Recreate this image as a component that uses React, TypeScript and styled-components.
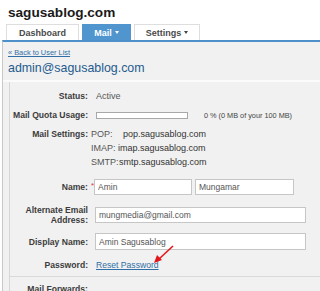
import React from 'react'
import styled, { createGlobalStyle } from 'styled-components'

const GlobalStyle = createGlobalStyle`
  html, body {
    margin: 0;
    padding: 0;
    background: #ffffff;
  }
  body {
    width: 320px;
    height: 291px;
    overflow: hidden;
    font-family: 'Liberation Sans', Arial, sans-serif;
  }
`

const App = () => {
  return (
    <>
      <GlobalStyle />
      <Header>
        <SiteTitle>sagusablog.com</SiteTitle>
        <Tabs>
          <Tab $width={73}>Dashboard</Tab>
          <Tab $width={49} $active>
            Mail <Caret $active />
          </Tab>
          <Tab $width={66}>
            Settings <Caret />
          </Tab>
        </Tabs>
      </Header>
      <Main>
        <TopSection>
          <BackLink href="#">« Back to User List</BackLink>
          <Account>admin@sagusablog.com</Account>
        </TopSection>
        <Panel>
          <Row $top={7}>
            <Label>Status:</Label>
            <Value>Active</Value>
          </Row>
          <Row $top={5}>
            <Label>Mail Quota Usage:</Label>
            <Quota>
              <QuotaBar />
              <QuotaText>0 % (0 MB of your 100 MB)</QuotaText>
            </Quota>
          </Row>
          <Row $top={5} $align="start">
            <Label>Mail Settings:</Label>
            <Servers>
              <Server>
                <Proto $width={32}>POP:</Proto>pop.sagusablog.com
              </Server>
              <Server>
                <Proto $width={27}>IMAP:</Proto>imap.sagusablog.com
              </Server>
              <Server>
                <Proto $width={28}>SMTP:</Proto>smtp.sagusablog.com
              </Server>
            </Servers>
          </Row>
          <Row $top={10}>
            <Label>
              Name:<Required>*</Required>
            </Label>
            <Pair>
              <Field $width={98} defaultValue="Amin" />
              <Field $width={99} defaultValue="Mungamar" />
            </Pair>
          </Row>
          <Row $top={10}>
            <Label $lines>
              Alternate Email
              <br />
              Address:
            </Label>
            <Field $width={211} defaultValue="mungmedia@gmail.com" />
          </Row>
          <Row $top={8}>
            <Label>Display Name:</Label>
            <Field $width={211} $height={17} defaultValue="Amin Sagusablog" />
          </Row>
          <Row $top={8}>
            <Label>Password:</Label>
            <LinkCell>
              <ResetLink href="#">Reset Password</ResetLink>
              <Arrow width="24" height="22" viewBox="0 0 24 22">
                <line x1="20" y1="2" x2="6" y2="15" stroke="#e3161b" strokeWidth="1.6" />
                <polygon points="1,19 4,11 9,16" fill="#e3161b" />
              </Arrow>
            </LinkCell>
          </Row>
          <Divider />
          <Row $top={5}>
            <Label>Mail Forwards:</Label>
          </Row>
        </Panel>
      </Main>
    </>
  )
}

const Header = styled.header`
  padding: 4px 0 0 8px;
`

const SiteTitle = styled.h1`
  margin: 0 0 3px;
  font-size: 13.6px;
  line-height: 17px;
  font-weight: bold;
  color: #1a1a1a;
`

const Tabs = styled.nav`
  display: flex;
  gap: 3px;
  margin-left: -2px;
`

const Tab = styled.div<{ $width: number; $active?: boolean }>`
  width: ${({ $width }) => $width}px;
  height: 16px;
  box-sizing: border-box;
  display: flex;
  align-items: center;
  justify-content: center;
  gap: 3px;
  font-size: 9px;
  font-weight: bold;
  color: ${({ $active }) => ($active ? '#ffffff' : '#4a4a4a')};
  background: ${({ $active }) => ($active ? '#5195cf' : '#ffffff')};
  border: 1px solid ${({ $active }) => ($active ? '#5195cf' : '#dedede')};
  border-bottom: none;
`

const Caret = styled.span<{ $active?: boolean }>`
  width: 0;
  height: 0;
  border-left: 2.5px solid transparent;
  border-right: 2.5px solid transparent;
  border-top: 3px solid ${({ $active }) => ($active ? '#ffffff' : '#444444')};
`

const Main = styled.main`
  margin-left: 2px;
  border-left: 1px solid #c9c9c9;
  border-top: 2px solid #4d90ca;
  background: #f1f1f1;
  height: 260px;
`

const TopSection = styled.section`
  padding: 6px 0 0 5px;
  height: 32px;
  border-bottom: 2px solid #fbfbfb;
`

const BackLink = styled.a`
  display: block;
  font-size: 7.4px;
  line-height: 10px;
  color: #2f6fa6;
  text-decoration: underline;
`

const Account = styled.h2`
  margin: 2px 0 0;
  font-size: 12.4px;
  line-height: 16px;
  font-weight: normal;
  color: #1f5b8e;
`

const Panel = styled.section`
  margin-left: 6px;
  border-left: 1px solid #d6d6d6;
  display: flex;
  flex-direction: column;
  height: 220px;
`

const Row = styled.div<{ $top: number; $align?: string }>`
  display: grid;
  grid-template-columns: 78px 1fr;
  column-gap: 8px;
  align-items: ${({ $align }) => $align ?? 'center'};
  margin-top: ${({ $top }) => $top}px;
  min-height: 14px;
`

const Label = styled.div<{ $lines?: boolean }>`
  position: relative;
  text-align: right;
  font-size: 8.6px;
  line-height: ${({ $lines }) => ($lines ? '10px' : '14px')};
  font-weight: bold;
  color: #3c3c3c;
`

const Required = styled.span`
  position: absolute;
  right: -6px;
  top: -1px;
  font-size: 8px;
  font-weight: normal;
  color: #d33;
`

const Value = styled.div`
  font-size: 9px;
  line-height: 14px;
  color: #555555;
`

const Quota = styled.div`
  display: flex;
  align-items: center;
  gap: 16px;
`

const QuotaBar = styled.div`
  width: 92px;
  height: 7px;
  box-sizing: border-box;
  background: #ffffff;
  border: 1px solid #a8a8a8;
`

const QuotaText = styled.span`
  font-size: 7.3px;
  color: #444444;
`

const Servers = styled.div`
  display: flex;
  flex-direction: column;
  margin-left: -5px;
`

const Server = styled.div`
  display: flex;
  font-size: 9px;
  line-height: 14px;
  color: #333333;
`

const Proto = styled.span<{ $width: number }>`
  width: ${({ $width }) => $width}px;
  color: #555555;
`

const Pair = styled.div`
  display: flex;
  gap: 4px;
  margin-left: -1px;
`

const Field = styled.input<{ $width: number; $height?: number }>`
  width: ${({ $width }) => $width}px;
  height: ${({ $height }) => $height ?? 16}px;
  box-sizing: border-box;
  margin: 0 0 0 -1px;
  padding: 0 3px;
  border: 1px solid #c6c6c6;
  background: #ffffff;
  font-family: 'Liberation Sans', Arial, sans-serif;
  font-size: 8.5px;
  color: #555555;
  outline: none;
`

const LinkCell = styled.div`
  position: relative;
  height: 14px;
  display: flex;
  align-items: center;
`

const ResetLink = styled.a`
  font-size: 8.6px;
  color: #2f6fa6;
  text-decoration: underline;
`

const Arrow = styled.svg`
  position: absolute;
  left: 57px;
  top: -14px;
`

const Divider = styled.hr`
  margin: 4px 0 0;
  border: none;
  border-top: 1px solid #d9d9d9;
`

export default App
